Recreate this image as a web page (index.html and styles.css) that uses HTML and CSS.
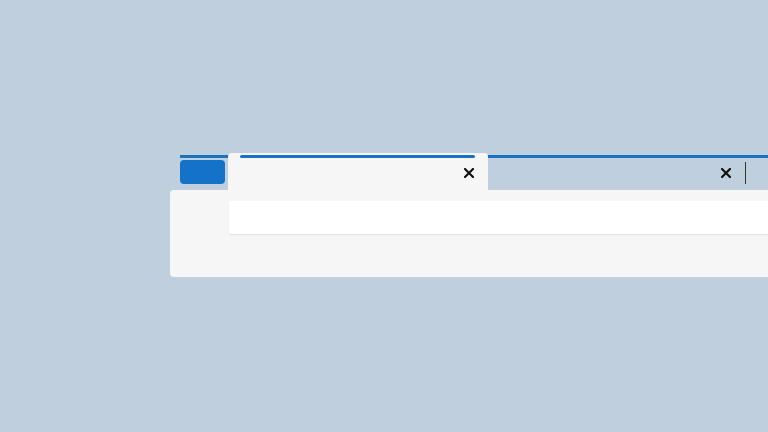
FILE: index.html
```html
<!DOCTYPE html>
<html lang="en">
<head>
<meta charset="utf-8">
<title>Tabs</title>
<link rel="stylesheet" href="styles.css">
</head>
<body>
<div class="window">
  <div class="tabbar">
    <div class="app-button"></div>
    <div class="tab active">
      <div class="tab-indicator"></div>
      <div class="tab-row">
        <svg class="close" viewBox="0 0 10 10" width="10" height="10"><path d="M1 1L9 9M9 1L1 9" stroke="#111" stroke-width="2.2" stroke-linecap="square"/></svg>
      </div>
    </div>
    <div class="controls">
      <svg class="close" viewBox="0 0 10 10" width="10" height="10"><path d="M1 1L9 9M9 1L1 9" stroke="#111" stroke-width="2.2" stroke-linecap="square"/></svg>
      <div class="caret"></div>
    </div>
  </div>
  <div class="panel">
    <div class="field"></div>
  </div>
</div>
</body>
</html>
```

FILE: styles.css
```css
html, body {
  margin: 0;
  padding: 0;
}
body {
  width: 768px;
  height: 432px;
  overflow: hidden;
  background: #bfcfdd;
  font-family: "Liberation Sans", Arial, sans-serif;
}
.window {
  margin: 153px 0 0 170px;
  width: 598px;
}
.tabbar {
  display: flex;
  align-items: flex-start;
  height: 37px;
  margin-left: 10px;
  background: linear-gradient(#1a71c2, #1a71c2) no-repeat 0 2px / 100% 3px;
}
.app-button {
  width: 45px;
  height: 24px;
  margin-top: 7px;
  border-radius: 4px;
  background: #1473c9;
}
.tab {
  display: flex;
  flex-direction: column;
  width: 260px;
  height: 37px;
  margin-left: 3px;
  border-radius: 4px 4px 0 0;
  background: #f6f6f7;
}
.tab-indicator {
  height: 3px;
  margin: 2px 13px 0 12px;
  border-radius: 2px;
  background: #1a71c2;
}
.tab-row {
  display: flex;
  justify-content: flex-end;
  padding: 10px 14px 0 0;
}
.close {
  display: block;
}
.controls {
  display: flex;
  align-items: center;
  margin: 8px 0 0 233px;
  height: 23px;
}
.caret {
  width: 1px;
  height: 22px;
  margin-left: 14px;
  background: #333;
}
.panel {
  height: 87px;
  padding-top: 11px;
  box-sizing: border-box;
  border-radius: 4px 0 0 4px;
  background: #f6f6f6;
}
.field {
  height: 33px;
  margin-left: 59px;
  background: #ffffff;
  box-shadow: 0 1px 1px rgba(0, 0, 0, 0.07);
}
```
